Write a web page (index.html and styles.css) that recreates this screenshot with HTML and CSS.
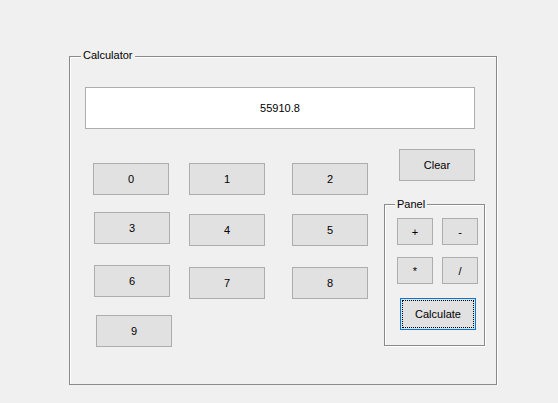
FILE: index.html
```html
<!DOCTYPE html>
<html lang="en">
<head>
<meta charset="utf-8">
<title>Calculator</title>
<link rel="stylesheet" href="styles.css">
</head>
<body>
<div class="form">
  <div class="group">
    <span class="group-title">Calculator</span>
    <div class="display">55910.8</div>
    <div class="main">
      <div class="numpad">
        <button class="btn">0</button>
        <button class="btn">1</button>
        <button class="btn">2</button>
        <button class="btn nudge-x1">3</button>
        <button class="btn nudge-y2">4</button>
        <button class="btn nudge-y2">5</button>
        <button class="btn nudge-x1">6</button>
        <button class="btn nudge-y2">7</button>
        <button class="btn nudge-y2">8</button>
        <button class="btn nudge-x3">9</button>
      </div>
      <div class="side">
        <button class="btn clear">Clear</button>
        <div class="panel">
          <span class="panel-title">Panel</span>
          <div class="ops">
            <button class="btn op">+</button>
            <button class="btn op">-</button>
            <button class="btn op">*</button>
            <button class="btn op">/</button>
          </div>
          <button class="btn calc">Calculate</button>
        </div>
      </div>
    </div>
  </div>
</div>
</body>
</html>
```
FILE: styles.css
```css
html, body {
  margin: 0;
  background: #f0f0f0;
  font: 11px "Liberation Sans", Arial, sans-serif;
  color: #000;
}

.form {
  padding: 56px 0 0 69px;
}

.group {
  position: relative;
  box-sizing: border-box;
  width: 428px;
  height: 329px;
  padding: 30px 0 0 15px;
  border: 1px solid #8a8a8a;
  box-shadow: 1px 1px 0 #fff, inset 1px 1px 0 #fff;
}

.group-title,
.panel-title {
  position: absolute;
  line-height: 14px;
  padding: 0 2px;
  background: #f0f0f0;
  white-space: nowrap;
}

.group-title {
  top: -9px;
  left: 11px;
}

.panel-title {
  top: -8px;
  left: 10px;
}

.display {
  box-sizing: border-box;
  width: 390px;
  height: 42px;
  border: 1px solid #adadad;
  background: #fff;
  display: flex;
  align-items: center;
  justify-content: center;
}

.main {
  display: flex;
  align-items: flex-start;
  margin-top: 20px;
}

.numpad {
  display: grid;
  grid-template-columns: 96px 103px 76px;
  grid-template-rows: 49px 53px 50px 32px;
  align-items: start;
  margin: 14px 0 0 8px;
}

.btn {
  box-sizing: border-box;
  width: 76px;
  height: 32px;
  margin: 0;
  padding: 0;
  border: 1px solid #adadad;
  border-radius: 0;
  background: #e1e1e1;
  font: inherit;
  color: #000;
}

.nudge-x1 { margin-left: 1px; }
.nudge-x3 { margin-left: 3px; }
.nudge-y2 { margin-top: 2px; }

.side {
  display: flex;
  flex-direction: column;
  align-items: flex-start;
  margin-left: 16px;
}

.clear {
  margin-left: 15px;
}

.panel {
  position: relative;
  box-sizing: border-box;
  width: 101px;
  height: 142px;
  margin-top: 23px;
  padding: 13px 0 0 12px;
  border: 1px solid #8a8a8a;
  box-shadow: 1px 1px 0 #fff, inset 1px 1px 0 #fff;
}

.ops {
  display: grid;
  grid-template-columns: 36px 36px;
  grid-auto-rows: 27px;
  column-gap: 9px;
  row-gap: 12px;
}

.op {
  width: 36px;
  height: 27px;
}

.calc {
  display: block;
  margin: 14px 0 0 3px;
  border-color: #0078d7;
  outline: 1px dotted #000;
  outline-offset: -3px;
}
```
